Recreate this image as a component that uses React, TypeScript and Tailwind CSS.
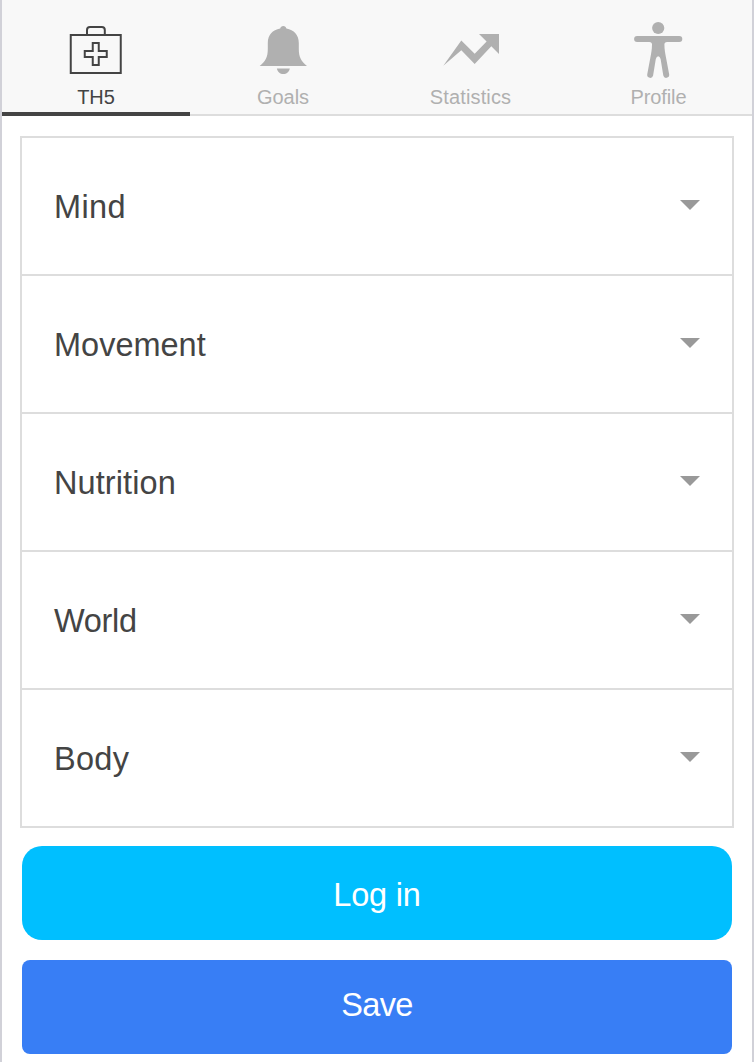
import type { ReactNode } from "react";

const medkit = (
  <svg className="h-[60px] w-[60px]" viewBox="66 20 60 60" fill="none" stroke="#444" strokeWidth="2">
    <rect x="70.75" y="35" width="50" height="38" />
    <path d="M87 35v-5a3 3 0 0 1 3-3h11.8a3 3 0 0 1 3 3v5" />
    <path d="M92.75 43h6v8h8v6h-8v8h-6v-8h-8v-6h8z" />
  </svg>
);

const bell = (
  <svg className="h-[60px] w-[61px]" viewBox="253 20 61 60" fill="#b0b0b0">
    <path d="M259.7 66C265.5 61.5 267.8 57 267.8 49V43C267.8 35 272.5 30 280.2 28.6C280.5 27 281.7 26 283.3 26C284.9 26 286.1 27 286.4 28.6C294 30 298.8 35 298.8 43V49C298.8 57 301.2 61.5 307 66Z" />
    <path d="M276.9 68.4H289.8C289.2 71.8 286.6 74 283.3 74C280 74 277.5 71.8 276.9 68.4Z" />
  </svg>
);

const trend = (
  <svg className="h-[60px] w-[60px]" viewBox="441 20 60 60" fill="#b0b0b0">
    <path d="M443.3 65.7 461.3 40.5 474.7 53.8 486.6 41.6 479 34H499V54L491.3 46.3 474.7 64 461.3 50.2Z" />
  </svg>
);

const person = (
  <svg className="h-[60px] w-[61px]" viewBox="628 20 61 60" fill="#b0b0b0">
    <circle cx="658.2" cy="28" r="6.1" />
    <path d="M637.1 36H679.3A3 3 0 0 1 679.3 42H667Q664.4 42 664.4 44.6C664.4 50 665.4 54 666.1 58L669.2 74.6A3 3 0 0 1 663.3 75.6L660.6 59Q659.8 56.3 658.2 56.3T655.8 59L653.1 75.6A3 3 0 0 1 647.2 74.6L650.3 58C651 54 652 50 652 44.6Q652 42 649.4 42H637.1A3 3 0 0 1 637.1 36Z" />
  </svg>
);

type Tab = { label: string; icon: ReactNode; width: string; text: string };

const tabs: Tab[] = [
  { label: "TH5", icon: medkit, width: "w-[188px]", text: "tracking-[-0.1px]" },
  { label: "Goals", icon: bell, width: "w-[187px]", text: "mr-px tracking-normal" },
  { label: "Statistics", icon: trend, width: "w-[188px]", text: "mr-px tracking-[0.15px]" },
  { label: "Profile", icon: person, width: "w-[187px]", text: "tracking-[-0.1px]" },
];

const sections = [
  { label: "Mind", tracking: "tracking-[0.4px]" },
  { label: "Movement", tracking: "tracking-normal" },
  { label: "Nutrition", tracking: "tracking-[0.1px]" },
  { label: "World", tracking: "tracking-[-0.3px]" },
  { label: "Body", tracking: "tracking-[0.3px]" },
];

export default function App() {
  return (
    <div className="h-[1062px] w-[754px] overflow-hidden border-x-2 border-[#d1d1d8] bg-white font-['Liberation_Sans',Arial,sans-serif] text-[#444]">
      <nav className="flex h-[116px] bg-[#f8f8f8]">
        {tabs.map((tab, i) => (
          <button
            key={tab.label}
            className={`flex flex-col items-center pt-5 ${tab.width} ${
              i === 0 ? "border-b-4 border-[#444]" : "border-b-2 border-[#ddd] text-[#b0b0b0]"
            }`}
          >
            {tab.icon}
            <span className={`mt-[5px] text-[20px] leading-6 ${tab.text}`}>{tab.label}</span>
          </button>
        ))}
      </nav>

      <main className="px-[18px] pt-5">
        <ul className="divide-y-2 divide-[#ddd] border-2 border-[#ddd]">
          {sections.map((s) => (
            <li key={s.label} className="flex h-[138px] items-center justify-between pr-8 pl-8 last:h-[136px]">
              <span className={`pt-0.5 text-[32.5px] leading-10 ${s.tracking}`}>{s.label}</span>
              <svg className="mb-0.5 h-[10px] w-5" viewBox="0 0 20 10" fill="#999">
                <path d="M0 0h20L10 10z" />
              </svg>
            </li>
          ))}
        </ul>

        <div className="mt-[18px] flex flex-col gap-5 px-0.5 text-white">
          <button className="h-[94px] rounded-[20px] bg-[#00bfff] pt-1 text-[32.5px] leading-10 tracking-[-0.2px]">Log in</button>
          <button className="h-[94px] rounded-lg bg-[#387ef5] pb-1 text-[32.5px] leading-10 tracking-[-0.7px]">Save</button>
        </div>
      </main>
    </div>
  );
}
